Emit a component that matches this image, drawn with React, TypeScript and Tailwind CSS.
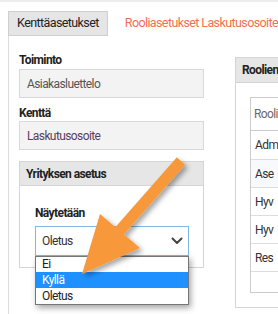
import React from "react";

const font = { fontFamily: 'Roboto, "Liberation Sans", sans-serif' } as React.CSSProperties;

function Chevron() {
  return (
    <svg width="12" height="8" viewBox="0 0 12 8" fill="none">
      <path d="M1.5 1.5 L6 6 L10.5 1.5" stroke="#444" strokeWidth="2" strokeLinecap="round" strokeLinejoin="round" />
    </svg>
  );
}

export default function App() {
  const rows = ["Adm", "Ase", "Hyv", "Hyv", "Res", ""];
  return (
    <div className="relative w-[278px] h-[314px] overflow-hidden bg-white text-[12px] tracking-[-0.6px] text-[#333]" style={font}>
      <div className="h-[2px] bg-[#eeeeee]" />
      <div className="flex mt-[9px] pl-[8px] h-[25px]">
        <div className="w-[107px] bg-[#e5e5e5] border border-[#cfcfcf] flex items-center justify-center text-[#222] text-[12.5px]">
          Kenttäasetukset
        </div>
        <div className="flex-1 flex items-center pl-[17px] text-[#f0714f] whitespace-nowrap text-[12.5px]">
          Rooliasetukset Laskutusosoite
        </div>
      </div>
      <div className="ml-[8px] border-l border-[#dcdcdc] h-[300px] flex pl-[10px] pt-[16px] gap-[31px]">
        <div className="w-[185px] shrink-0 flex flex-col">
          <div className="font-bold text-[#222] leading-[16px] h-[17px]">Toiminto</div>
          <div className="h-[29px] bg-[#f3f3f3] border border-[#d9d9d9] flex items-center pl-[7px] text-[#555]">
            Asiakasluettelo
          </div>
          <div className="font-bold text-[#222] leading-[16px] h-[16px] mt-[7px]">Kenttä</div>
          <div className="h-[29px] bg-[#f3f3f3] border border-[#d9d9d9] flex items-center pl-[7px] text-[#5a3d5c]">
            Laskutusosoite
          </div>
          <div className="mt-[11px] h-[107px] border border-[#d5d5d5] flex flex-col">
            <div className="h-[24px] bg-[#e6e6e6] border-b border-[#d5d5d5] flex items-center pl-[6px] font-bold text-[#222]">
              Yrityksen asetus
            </div>
            <div className="pl-[15px] pt-[19px] relative">
              <div className="font-bold text-[#222] leading-[16px] h-[21px]">Näytetään</div>
              <div className="w-[154px] h-[30px] border border-[#7fb8e8] flex items-center justify-between pl-[6px] pr-[5px] text-[#333] bg-white">
                <span>Oletus</span>
                <Chevron />
              </div>
              <div className="absolute left-[15px] top-[70px] w-[154px] border border-[#767676] bg-white shadow-[2px_3px_6px_rgba(0,0,0,0.35)] flex flex-col text-[#222]">
                <div className="h-[15px] leading-[15px] pl-[6px]">Ei</div>
                <div className="h-[16px] leading-[16px] pl-[6px] bg-[#1e90ff] text-white">Kyllä</div>
                <div className="h-[16px] leading-[16px] pl-[6px]">Oletus</div>
              </div>
            </div>
          </div>
        </div>
        <div className="mt-[5px] w-[60px] shrink-0 h-[251px] border border-[#d5d5d5] flex flex-col">
          <div className="h-[25px] bg-[#e6e6e6] border-b border-[#d5d5d5] flex items-center pl-[6px] font-bold text-[#222] whitespace-nowrap">
            Roolien
          </div>
          <div className="pl-[14px] pt-[14px]">
            <div className="w-[60px] border border-[#cccccc] flex flex-col">
              <div className="h-[33px] flex items-center pl-[3px] text-[#6e6767] border-b border-[#cccccc] whitespace-nowrap">Rooli</div>
              {rows.map((r, i) => (
                <div
                  key={i}
                  className={`${i === rows.length - 1 ? "h-[21px]" : "h-[28px]"} flex items-center pl-[4px] text-[#333] ${i > 0 ? "border-t border-[#dddddd]" : ""} ${i === 1 ? "bg-[#f8f9fc]" : ""}`}
                >
                  {r}
                </div>
              ))}
            </div>
          </div>
        </div>
      </div>
      <svg className="absolute inset-0 pointer-events-none" width="278" height="314" viewBox="0 0 278 314">
        <defs>
          <filter id="sh" x="-20%" y="-20%" width="140%" height="140%">
            <feDropShadow dx="3" dy="3" stdDeviation="2.5" floodColor="#000" floodOpacity="0.35" />
          </filter>
        </defs>
        <g filter="url(#sh)">
          <line x1="181" y1="161" x2="115" y2="236" stroke="#f7983a" strokeWidth="11" />
          <polygon points="82,274 100,214 140,248" fill="#f7983a" />
        </g>
      </svg>
    </div>
  );
}
